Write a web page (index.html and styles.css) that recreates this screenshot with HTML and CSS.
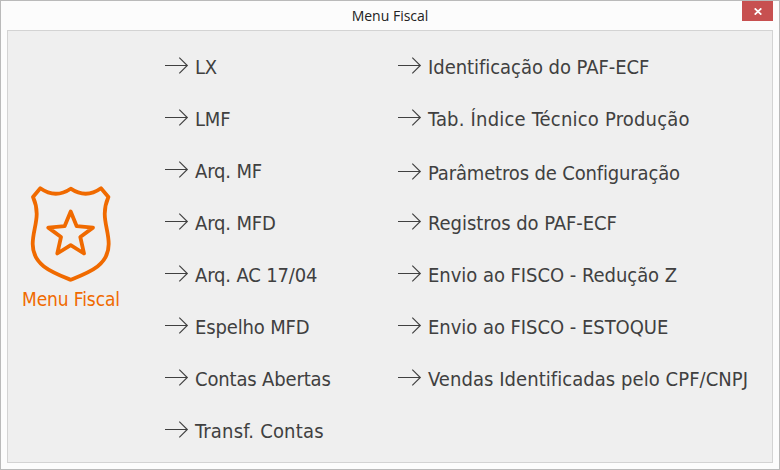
FILE: index.html
```html
<!DOCTYPE html>
<html lang="pt-BR">
<head>
<meta charset="utf-8">
<title>Menu Fiscal</title>
<link rel="stylesheet" href="styles.css">
</head>
<body>
<svg class="defs" width="0" height="0"><symbol id="arrow" viewBox="0 0 24 18"><path d="M0 8.500H22.300M14.300 .6L22.300 8.500L14.300 16.400" fill="none" stroke="#404040" stroke-width="1.15"/></symbol></svg>
<div class="window">
  <header class="titlebar">
    <h1 class="title">Menu Fiscal</h1>
    <button class="close" aria-label="Fechar"><svg width="8" height="7" viewBox="0 0 8 7"><path d="M.7 .4L7.300 6.600M7.300 .4L.7 6.600" stroke="#fff" stroke-width="1.8"/></svg></button>
  </header>
  <main class="panel">
    <section class="brand">
      <svg class="badge" width="82" height="98" viewBox="0 0 82 98" fill="none" stroke="#f06a00" stroke-width="3.8" stroke-linejoin="round"><path d="M10.300 3.300Q25.500 14 40.700 3.700Q56 14 71 3.300L78.400 12C70 31 78.700 43 78.700 59C78.700 80 60 87 40.700 94.800C21.500 87 2.700 80 2.700 59C2.700 43 11.500 31 3 12Z"/><path d="M40.700 26.500L46.700 41.200L63 42.600L50.300 52L54 68.500L40.700 60.200L27.300 68.500L31 52L18.300 42.600L34.600 41.200Z"/></svg>
      <div class="brand-name">Menu Fiscal</div>
    </section>
    <nav class="column first">
      <a class="item"><svg class="arrow"><use href="#arrow"/></svg><span>LX</span></a>
      <a class="item"><svg class="arrow"><use href="#arrow"/></svg><span>LMF</span></a>
      <a class="item"><svg class="arrow"><use href="#arrow"/></svg><span>Arq. MF</span></a>
      <a class="item"><svg class="arrow"><use href="#arrow"/></svg><span>Arq. MFD</span></a>
      <a class="item"><svg class="arrow"><use href="#arrow"/></svg><span>Arq. AC 17/04</span></a>
      <a class="item"><svg class="arrow"><use href="#arrow"/></svg><span>Espelho MFD</span></a>
      <a class="item"><svg class="arrow"><use href="#arrow"/></svg><span>Contas Abertas</span></a>
      <a class="item loose"><svg class="arrow"><use href="#arrow"/></svg><span>Transf. Contas</span></a>
    </nav>
    <nav class="column second">
      <a class="item"><svg class="arrow"><use href="#arrow"/></svg><span>Identificação do PAF-ECF</span></a>
      <a class="item loose"><svg class="arrow"><use href="#arrow"/></svg><span>Tab. Índice Técnico Produção</span></a>
      <a class="item lowered"><svg class="arrow"><use href="#arrow"/></svg><span>Parâmetros de Configuração</span></a>
      <a class="item"><svg class="arrow"><use href="#arrow"/></svg><span>Registros do PAF-ECF</span></a>
      <a class="item"><svg class="arrow"><use href="#arrow"/></svg><span>Envio ao FISCO - Redução Z</span></a>
      <a class="item"><svg class="arrow"><use href="#arrow"/></svg><span>Envio ao FISCO - ESTOQUE</span></a>
      <a class="item wide"><svg class="arrow"><use href="#arrow"/></svg><span>Vendas Identificadas pelo CPF/CNPJ</span></a>
    </nav>
  </main>
</div>
</body>
</html>
```
FILE: styles.css
```css
* { box-sizing: border-box; }
body { margin: 0; font-family: "DejaVu Sans Condensed", "DejaVu Sans", sans-serif; font-stretch: condensed; font-variant-ligatures: none; color: #404040; }
.defs { display: none; }
.window { width: 780px; height: 470px; border: 1px solid #bababa; background: #fcfcfc; padding: 0 6px 6px; display: flex; flex-direction: column; }
.titlebar { height: 29px; display: grid; grid-template-columns: 1fr auto 1fr; align-items: start; }
.title { grid-column: 2; margin: 0; font: 400 14px/30px "Open Sans", sans-serif; letter-spacing: 0; color: #222; }
.close { justify-self: end; width: 31px; height: 20px; padding: 0; border: 0; background: #c75050; display: flex; align-items: center; justify-content: center; }
.panel { flex: 1; border: 1px solid #d3d3d3; background: #efefef; display: flex; }
.brand { width: 157px; padding-top: 154px; color: #f06a00; }
.badge { display: block; margin-left: 22px; }
.brand-name { margin: 4px 0 0 14px; font-size: 19px; line-height: 24px; letter-spacing: -.1px; white-space: nowrap; }
.column { padding-top: 9px; }
.first { width: 233px; }
.item { height: 52px; display: flex; align-items: center; font-size: 20px; letter-spacing: -.15px; white-space: nowrap; }
.item span { padding-top: 2px; }
.second .item { letter-spacing: -.04px; }
.item.loose { letter-spacing: .2px; }
.second .lowered { padding-top: 4px; letter-spacing: -.15px; }
.second .wide { letter-spacing: .06px; }
.arrow { width: 24px; height: 18px; margin-right: 6px; }
```
